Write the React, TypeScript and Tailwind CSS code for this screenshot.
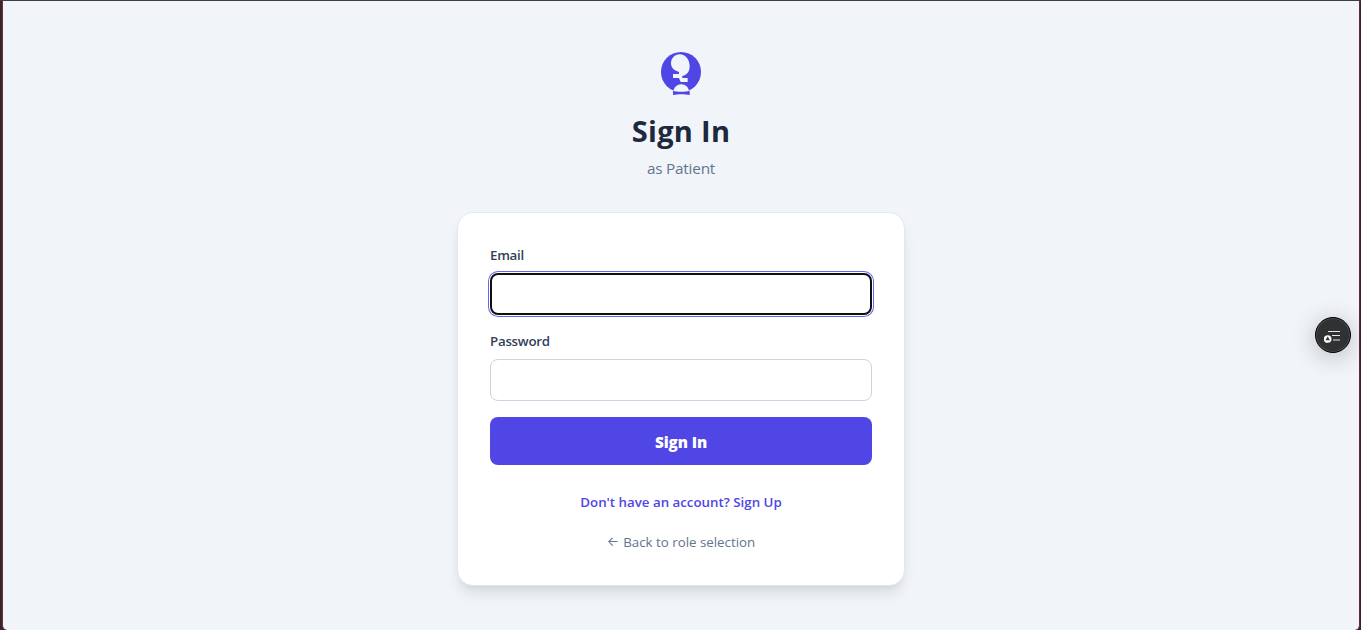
import React, { useState } from 'react';

function Logo() {
  return (
    <svg className="block h-[44px] w-[40px]" viewBox="33 30 120 132">
      <circle cx="93" cy="90" r="60" fill="#4f46e5" />
      <path
        d="M89 37c19 0 30 17 30 36 0 16-8 26-22 29v6h16v12H92l-5-12H69V96h18v-6C72 86 63 77 63 64c0-15 11-27 26-27z"
        fill="#f1f5f9"
      />
      <path d="M70 148c2-12 11-21 24-21s21 9 23 21v14H70z" fill="#f1f5f9" />
      <path d="M69 146c8 4 40 4 50 0v13c-14-3-36-3-50 0z" fill="#4f46e5" />
    </svg>
  );
}

function ReaderButton() {
  return (
    <button
      aria-label="Open reader"
      className="fixed left-[1315px] top-[317px] h-9 w-9 rounded-full border-[1.5px] border-black bg-[#303133] shadow-[0_4px_24px_rgba(0,0,0,0.24),inset_0_0_0_1px_#4b4c4e]"
    >
      <svg className="absolute left-2 top-[11px]" width="18" height="16" viewBox="0 0 18 16">
        <path d="M4 2.5h12M8 6.5h8M9 11h7" stroke="#e4e4e4" strokeWidth="1.2" />
        <circle cx="3.7" cy="10" r="3.8" fill="#fff" />
        <path d="M3.7 7.5l2.2 3.8H1.5z" fill="#303133" />
      </svg>
    </button>
  );
}

export default function App() {
  const [email, setEmail] = useState('');
  const [password, setPassword] = useState('');

  return (
    <div className="h-[630px] overflow-hidden border-t border-[#3e3b42] bg-[#3b2428] pl-[2px] pr-px font-['Open_Sans',sans-serif]">
      <div className="flex h-[629px] flex-col items-center rounded-b-[5px] border-x border-l-[#71313f] border-r-[#5f2b36] bg-[#f1f5f9] pt-[51px]">
        <Logo />
        <h1 className="mt-[17px] text-[29px] font-bold leading-9 tracking-[0.3px] text-slate-800">Sign In</h1>
        <p className="mt-[7px] text-[15.3px] leading-6 tracking-[-0.2px] text-slate-500">as Patient</p>

        <div className="mt-8 h-[374px] w-[448px] rounded-2xl border border-slate-200 bg-white p-8 shadow-lg">
          <form onSubmit={e => e.preventDefault()}>
            <label htmlFor="email" className="mb-2 block text-[13.3px] font-semibold leading-5 tracking-[-0.25px] text-slate-700">
              Email
            </label>
            <input
              id="email"
              type="email"
              value={email}
              onChange={e => setEmail(e.target.value)}
              className="block h-[42px] w-full rounded-lg border-2 border-[#101010] bg-white px-3 shadow-[0_0_0_1px_#fff,0_0_0_2px_#6366f1] outline-none"
            />
            <label htmlFor="password" className="mb-2 mt-4 block text-[13.3px] font-semibold leading-5 tracking-[-0.25px] text-slate-700">
              Password
            </label>
            <input
              id="password"
              type="password"
              value={password}
              onChange={e => setPassword(e.target.value)}
              className="block h-[42px] w-full rounded-lg border border-slate-300 bg-white px-3 outline-none"
            />
            <button type="submit" className="mt-4 h-12 w-full rounded-lg bg-[#4f46e5] pt-0.5 text-[15.3px] font-extrabold tracking-[-0.1px] text-white">
              Sign In
            </button>
          </form>
          <div className="mt-[27px] flex flex-col items-center gap-5">
            <button className="text-[13.3px] font-semibold leading-5 text-[#4f46e5]">Don't have an account? Sign Up</button>
            <button className="flex items-center gap-1 text-[13.3px] leading-5 text-slate-500">
              <span className="-mt-[3px] font-['Inter'] text-[13px] leading-5">←</span>
              <span>Back to role selection</span>
            </button>
          </div>
        </div>
      </div>
      <ReaderButton />
    </div>
  );
}
